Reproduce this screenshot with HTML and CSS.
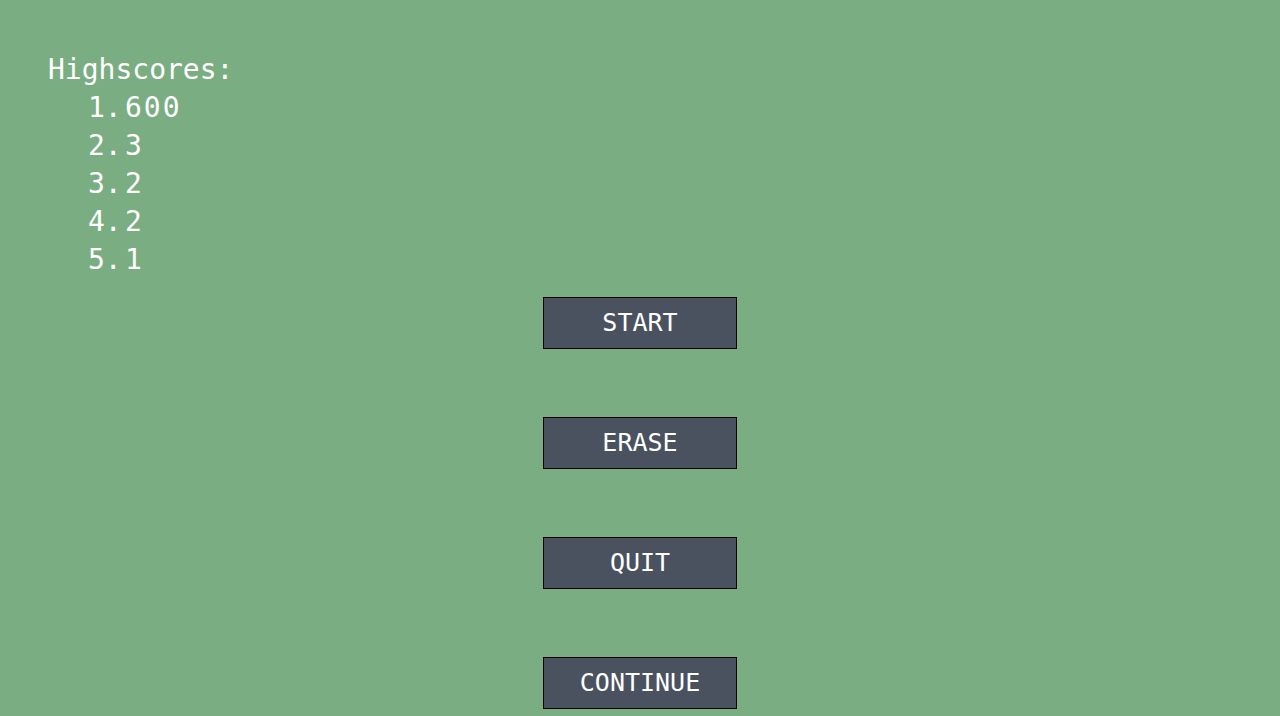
FILE: index.html
```html
<!DOCTYPE html>
<html>
<head>
<meta charset="utf-8">
<link rel="stylesheet" href="styles.css">
</head>
<body>
<div class="scores">
  <div class="title">Highscores:</div>
  <ol class="list">
    <li><span class="rank">1.</span><span class="val">600</span></li>
    <li><span class="rank">2.</span><span class="val">3</span></li>
    <li><span class="rank">3.</span><span class="val">2</span></li>
    <li><span class="rank">4.</span><span class="val">2</span></li>
    <li><span class="rank">5.</span><span class="val">1</span></li>
  </ol>
</div>
<div class="menu">
  <button class="btn">START</button>
  <button class="btn">ERASE</button>
  <button class="btn">QUIT</button>
  <button class="btn">CONTINUE</button>
</div>
</body>
</html>
```
FILE: styles.css
```css
html, body {
  margin: 0;
  padding: 0;
}
body {
  background: #7aad82;
  width: 1280px;
  height: 716px;
  overflow: hidden;
  font-family: "DejaVu Sans Mono", monospace;
  color: #ffffff;
}
.scores {
  padding: 51px 0 0 48px;
}
.title {
  font-size: 28px;
  line-height: 38px;
  height: 38px;
}
.list {
  list-style: none;
  margin: 0;
  padding: 0 0 0 40px;
  font-size: 28px;
  line-height: 38px;
}
.list li {
  display: flex;
  height: 38px;
}
.rank {
  width: 37px;
}
.val {
  letter-spacing: 2px;
}
.menu {
  display: flex;
  flex-direction: column;
  align-items: center;
  gap: 68px;
  margin-top: 18px;
}
.btn {
  width: 194px;
  height: 52px;
  margin: 0;
  padding: 0;
  background: #4a5260;
  border: 1px solid #000000;
  color: #ffffff;
  font-family: "DejaVu Sans Mono", monospace;
  font-size: 25px;
  line-height: 50px;
}
```
